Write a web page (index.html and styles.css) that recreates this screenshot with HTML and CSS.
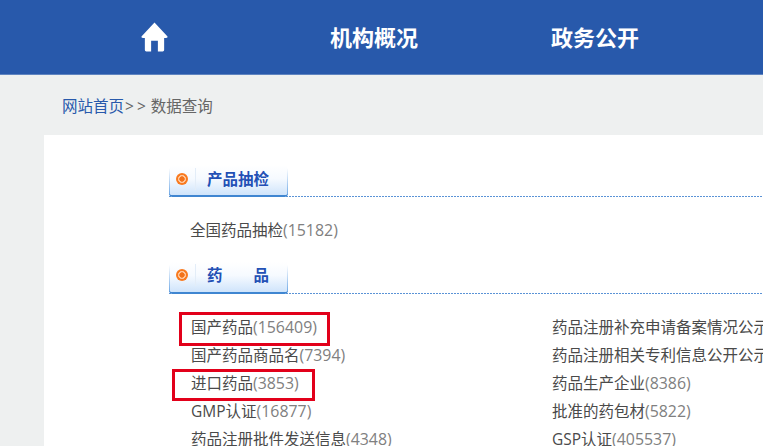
FILE: index.html
```html
<!DOCTYPE html>
<html lang="zh">
<head>
<meta charset="utf-8">
<title>数据查询</title>
<link rel="stylesheet" href="styles.css">
</head>
<body>
<header class="nav">
  <a class="nav-home" aria-label="首页">
    <svg width="27" height="30" viewBox="0 0 28 30"><path fill="#fff" d="M14 0 L27.500 14.500 Q28 16 26 16 L24 16 L24 28.500 Q24 30 22.500 30 L17.500 30 L17.500 19 L10.500 19 L10.500 30 L5.500 30 Q4 30 4 28.500 L4 16 L2 16 Q0 16 .5 14.500 Z"/></svg>
  </a>
  <a class="nav-item nav-item-first">机构概况</a>
  <a class="nav-item">政务公开</a>
</header>
<div class="crumbs"><a class="crumb-link">网站首页</a><span class="crumb-sep">&gt;&gt;</span><span>数据查询</span></div>
<main class="panel">
  <section class="group">
    <div class="group-head">
      <div class="tab"><span class="dot"></span><span class="tab-label">产品抽检</span></div>
    </div>
    <div class="list-single">
      <div class="entry">全国药品抽检<span class="num">(15182)</span></div>
    </div>
  </section>
  <section class="group">
    <div class="group-head">
      <div class="tab"><span class="dot"></span><span class="tab-label tab-label-wide"><span>药</span><span>品</span></span></div>
    </div>
    <div class="list">
      <div class="entry"><span class="mark mark-a">国产药品<span class="num">(156409)</span></span></div>
      <div class="entry">药品注册补充申请备案情况公示</div>
      <div class="entry">国产药品商品名<span class="num">(7394)</span></div>
      <div class="entry">药品注册相关专利信息公开公示</div>
      <div class="entry"><span class="mark mark-b">进口药品<span class="num">(3853)</span></span></div>
      <div class="entry">药品生产企业<span class="num">(8386)</span></div>
      <div class="entry">GMP认证<span class="num">(16877)</span></div>
      <div class="entry">批准的药包材<span class="num">(5822)</span></div>
      <div class="entry">药品注册批件发送信息<span class="num">(4348)</span></div>
      <div class="entry">GSP认证<span class="num">(405537)</span></div>
    </div>
  </section>
</main>
</body>
</html>
```
FILE: styles.css
```css
html, body {
  margin: 0;
  height: 446px;
  overflow: hidden;
}
body {
  background: #eef0f0;
  font-family: "Open Sans", "Noto Sans CJK SC", sans-serif;
  color: #4a4a4a;
  font-size: 15.5px;
}
.nav {
  height: 75px;
  background: #2859ab;
  border-bottom: 1px solid #5f84c0;
  box-sizing: border-box;
  display: flex;
  align-items: center;
  padding-left: 141px;
  color: #fff;
}
.nav-home {
  display: flex;
  width: 27px;
  margin-right: 162px;
  margin-top: -1px;
}
.nav-item {
  font-size: 22px;
  font-weight: 700;
  line-height: 30px;
  white-space: nowrap;
}
.nav-item-first { margin-right: 133px; }
.crumbs {
  height: 60px;
  box-sizing: border-box;
  padding: 20px 0 0 62px;
  line-height: 22px;
  color: #666;
  white-space: nowrap;
}
.crumb-link { color: #2859ab; }
.crumb-sep { letter-spacing: 3px; margin-right: 2px; margin-left: 1px; }
.panel {
  margin-left: 44px;
  background: #fff;
  height: 311px;
  box-sizing: border-box;
  padding: 30px 0 0 125px;
  overflow: hidden;
}
.group-head {
  height: 32px;
  box-sizing: border-box;
  padding-bottom: 1px;
  background: repeating-linear-gradient(90deg, #5b93d6 0 2px, #fff 2px 3px) left bottom / 100% 1px no-repeat;
  display: flex;
  align-items: flex-end;
}
.tab {
  width: 119px;
  height: 32px;
  margin-bottom: -1px;
  padding-bottom: 3px;
  box-sizing: border-box;
  background:
    linear-gradient(#fff 10%, #6ea8e6 100%) left top / 1px 100% no-repeat,
    linear-gradient(#fff 10%, #6ea8e6 100%) right top / 1px 100% no-repeat,
    linear-gradient(#fff 0%, #f6faff 45%, #cfe4fb 100%);
  border-bottom: 2px solid #3f86d1;
  border-radius: 0 0 4px 4px;
  display: flex;
  align-items: center;
}
.dot {
  width: 12px;
  height: 12px;
  margin-left: 7px;
  border-radius: 50%;
  background: radial-gradient(circle closest-side, #f2721a 0 40%, #ffc79c 48% 62%, #f97a1f 70%);
  flex: none;
}
.tab-label {
  margin-left: 7px;
  padding-left: 11px;
  width: 62px;
  border-left: 1px solid #e3edf8;
  line-height: 22px;
  color: #2350b5;
  font-weight: 700;
  white-space: nowrap;
  display: flex;
  justify-content: space-between;
}
.list-single {
  padding: 20px 0 17px 21px;
  line-height: 26px;
}
.list {
  display: grid;
  grid-template-columns: 361px 1fr;
  grid-auto-rows: 27.9px;
  white-space: nowrap;
  margin-top: 20.5px;
  padding-left: 22px;
}
.entry {
  line-height: 27.9px;
  min-width: 0;
}
.num { color: #808080; font-size: 15.9px; }
.mark { position: relative; display: inline-block; }
.mark::after {
  content: "";
  position: absolute;
  border: 3px solid #e2001a;
  box-sizing: border-box;
  pointer-events: none;
}
.mark-a::after { left: -12px; right: -13px; top: -2px; height: 34px; }
.mark-b::after { left: -19px; right: -16px; top: -1px; height: 32px; }
```
